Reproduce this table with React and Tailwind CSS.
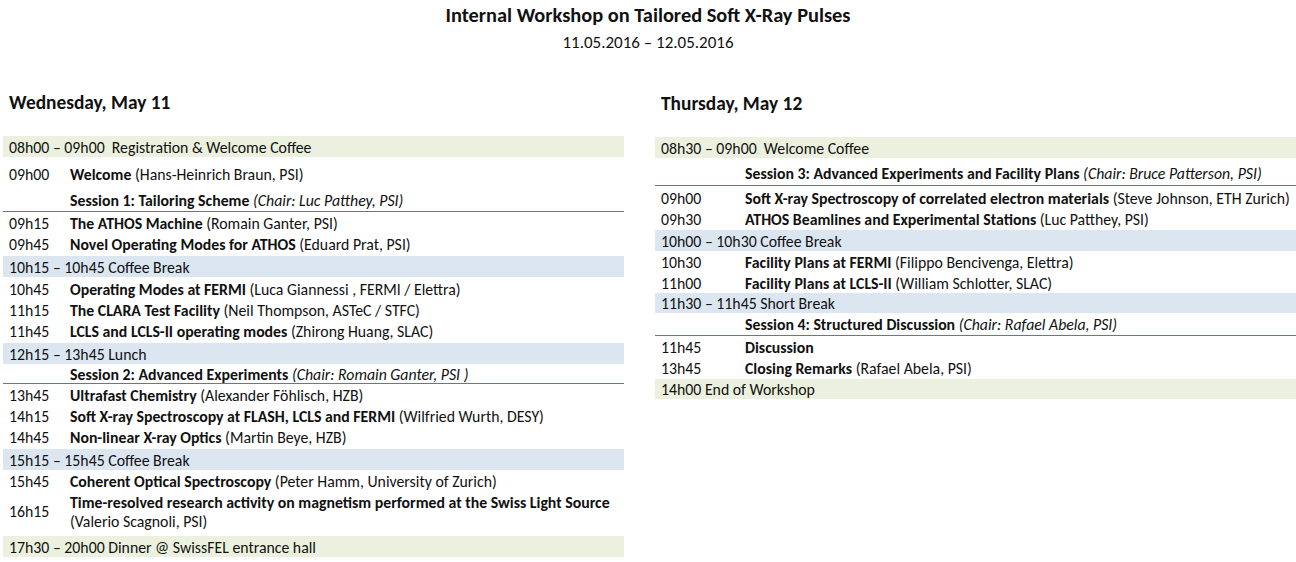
const font = { fontFamily: 'Carlito, Calibri, Lato, "Open Sans", sans-serif' };

const Band = ({ color, children, className = '' }) => (
  <div
    className={`flex items-center pl-[6px] pt-[2px] whitespace-pre ${
      color === 'green' ? 'bg-[#ebf1de]' : 'bg-[#dce6f1]'
    } ${className}`}
  >
    {children}
  </div>
);

const Talk = ({ time, title, who, timeW, className = 'h-[21px] pt-[2px]' }) => (
  <div className={`flex items-center pl-[6px] whitespace-nowrap ${className}`}>
    <span className={`${timeW} shrink-0`}>{time}</span>
    <span>
      <b className="font-bold">{title}</b>
      {who ? ` ${who}` : ''}
    </span>
  </div>
);

const Session = ({ title, chair, timeW, className }) => (
  <div className={`flex pl-[6px] whitespace-nowrap border-b border-[#5b79a8] ${className}`}>
    <span className={`${timeW} shrink-0`}></span>
    <span>
      <b className="font-bold">{title}</b> <i className="italic">{chair}</i>
    </span>
  </div>
);

const Wednesday = () => {
  const w = 'w-[61px]';
  return (
    <div className="w-[621px] shrink-0">
      <h2 className="pl-[6px] text-[19.4px] leading-[22px] font-bold">Wednesday, May 11</h2>
      <div className="mt-[22px] text-[15.8px] leading-[20px]">
        <Band color="green" className="h-[21px]">08h00 – 09h00  Registration &amp; Welcome Coffee</Band>
        <Talk timeW={w} time="09h00" title="Welcome" who="(Hans-Heinrich Braun, PSI)" className="h-[31px] pt-[4px]" />
        <Session timeW={w} title="Session 1: Tailoring Scheme" chair="(Chair: Luc Patthey, PSI)" className="h-[24px] items-center pt-[3px]" />
        <Talk timeW={w} time="09h15" title="The ATHOS Machine" who="(Romain Ganter, PSI)" />
        <Talk timeW={w} time="09h45" title="Novel Operating Modes for ATHOS" who="(Eduard Prat, PSI)" />
        <Band color="blue" className="h-[21px] mt-[2px]">10h15 – 10h45 Coffee Break</Band>
        <Talk timeW={w} time="10h45" title="Operating Modes at FERMI" who="(Luca Giannessi , FERMI / Elettra)" className="h-[21px] mt-[1px] pt-[2px]" />
        <Talk timeW={w} time="11h15" title="The CLARA Test Facility" who="(Neil Thompson, ASTeC / STFC)" />
        <Talk timeW={w} time="11h45" title="LCLS and LCLS-II operating modes" who="(Zhirong Huang, SLAC)" />
        <Band color="blue" className="h-[21px] mt-[2px]">12h15 – 13h45 Lunch</Band>
        <Session timeW={w} title="Session 2: Advanced Experiments" chair="(Chair: Romain Ganter, PSI )" className="h-[20px] items-center pt-[2px]" />
        <Talk timeW={w} time="13h45" title="Ultrafast Chemistry" who="(Alexander Föhlisch, HZB)" />
        <Talk timeW={w} time="14h15" title="Soft X-ray Spectroscopy at FLASH, LCLS and FERMI" who="(Wilfried Wurth, DESY)" />
        <Talk timeW={w} time="14h45" title="Non-linear X-ray Optics" who="(Martin Beye, HZB)" />
        <Band color="blue" className="h-[21px] mt-[2px]">15h15 – 15h45 Coffee Break</Band>
        <Talk timeW={w} time="15h45" title="Coherent Optical Spectroscopy" who="(Peter Hamm, University of Zurich)" />
        <div className="flex items-center pl-[6px] pt-[2px] h-[40px]">
          <span className={`${w} shrink-0`}>16h15</span>
          <span className="leading-[19px] whitespace-nowrap">
            <b className="font-bold">Time-resolved research activity on magnetism performed at the Swiss Light Source</b>
            <br />
            (Valerio Scagnoli, PSI)
          </span>
        </div>
        <Band color="green" className="h-[21px] mt-[5px]">17h30 – 20h00 Dinner @ SwissFEL entrance hall</Band>
      </div>
    </div>
  );
};

const Thursday = () => {
  const w = 'w-[84px]';
  return (
    <div className="flex-1">
      <h2 className="pl-[6px] pt-[1px] text-[19.4px] leading-[22px] font-bold">Thursday, May 12</h2>
      <div className="mt-[22px] text-[15.8px] leading-[20px]">
        <Band color="green" className="h-[21px]">08h30 – 09h00  Welcome Coffee</Band>
        <Session timeW={w} title="Session 3: Advanced Experiments and Facility Plans" chair="(Chair: Bruce Patterson, PSI)" className="h-[28px] items-center pt-[5px]" />
        <Talk timeW={w} time="09h00" title="Soft X-ray Spectroscopy of correlated electron materials" who="(Steve Johnson, ETH Zurich)" className="h-[21px] mt-[1px] pt-[2px]" />
        <Talk timeW={w} time="09h30" title="ATHOS Beamlines and Experimental Stations" who="(Luc Patthey, PSI)" />
        <Band color="blue" className="h-[21px] mt-[1px]">10h00 – 10h30 Coffee Break</Band>
        <Talk timeW={w} time="10h30" title="Facility Plans at FERMI" who="(Filippo Bencivenga, Elettra)" />
        <Talk timeW={w} time="11h00" title="Facility Plans at LCLS-II" who="(William Schlotter, SLAC)" />
        <Band color="blue" className="h-[20px]">11h30 – 11h45 Short Break</Band>
        <Session timeW={w} title="Session 4: Structured Discussion" chair="(Chair: Rafael Abela, PSI)" className="h-[23px] items-center pt-[2px]" />
        <Talk timeW={w} time="11h45" title="Discussion" />
        <Talk timeW={w} time="13h45" title="Closing Remarks" who="(Rafael Abela, PSI)" />
        <Band color="green" className="h-[20px] mt-[1px]">14h00 End of Workshop</Band>
      </div>
    </div>
  );
};

export default function App() {
  return (
    <div className="w-[1296px] h-[562px] bg-white text-[#111] overflow-hidden" style={font}>
      <header className="text-center pt-[4px]">
        <h1 className="text-[20.4px] leading-[22px] font-semibold">Internal Workshop on Tailored Soft X-Ray Pulses</h1>
        <p className="mt-[7px] text-[17px] leading-[20px]">11.05.2016 – 12.05.2016</p>
      </header>
      <main className="flex gap-[31px] pl-[3px] mt-[39px]">
        <Wednesday />
        <Thursday />
      </main>
    </div>
  );
}
